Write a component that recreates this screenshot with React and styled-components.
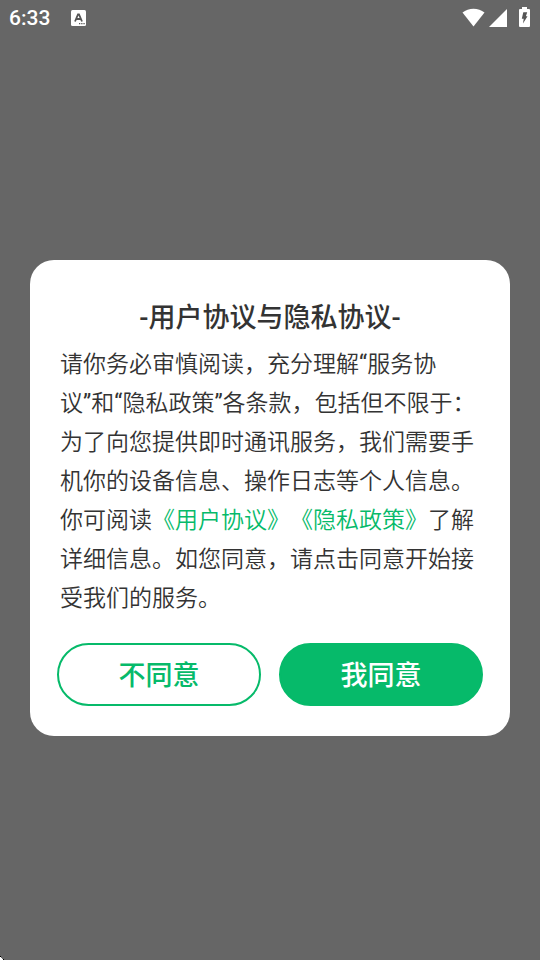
import React from "react";
import styled, { createGlobalStyle } from "styled-components";

const GREEN = "#06ba6a";

const GlobalStyle = createGlobalStyle`
  * { box-sizing: border-box; }
  body {
    margin: 0;
    background: #666666;
    font-family: Roboto, "Noto Sans CJK SC", sans-serif;
    color: #333333;
  }
`;

const Screen = styled.div`
  position: relative;
  display: flex;
  flex-direction: column;
  min-height: 100vh;
  background: #666666;
`;

const StatusBar = styled.header`
  display: flex;
  align-items: center;
  justify-content: space-between;
  height: 36px;
  padding: 0 9px;
  color: #ffffff;
`;

const StatusGroup = styled.div`
  display: flex;
  align-items: center;
  gap: ${(p) => p.$gap}px;
`;

const Clock = styled.time`
  font-size: 21px;
  font-weight: 500;
  line-height: 36px;
`;

const Icon = styled.svg`
  display: block;
  flex: none;
`;

const Stage = styled.main`
  flex: 1;
  display: flex;
  align-items: center;
  justify-content: center;
  padding: 0 30px;
`;

const Dialog = styled.section`
  width: 100%;
  padding: 32px 27px 30px;
  border-radius: 24px;
  background: #ffffff;
`;

const Title = styled.h1`
  margin: 0;
  font-size: 27px;
  font-weight: 500;
  line-height: 53px;
  text-align: center;
`;

const Message = styled.p`
  margin: 0 3px 25px;
  font-size: 23px;
  font-weight: 350;
  line-height: 39px;
  text-spacing-trim: space-all;
`;

const Quote = styled.span`
  font-weight: 400;
`;

const PolicyLink = styled.a`
  color: ${GREEN};
  text-decoration: none;
`;

const Actions = styled.div`
  display: grid;
  grid-template-columns: 1fr 1fr;
  gap: 18px;
`;

const ActionButton = styled.button`
  height: 63px;
  padding: 0 0 2px;
  border: 2px solid ${GREEN};
  border-radius: 32px;
  background: ${(p) => (p.$primary ? GREEN : "#ffffff")};
  color: ${(p) => (p.$primary ? "#ffffff" : GREEN)};
  font-family: inherit;
  font-size: 27px;
  font-weight: 500;
  cursor: pointer;
`;

const Corner = styled.svg`
  position: absolute;
  left: 0;
  bottom: 0;
`;

export default function App() {
  return (
    <Screen>
      <GlobalStyle />
      <StatusBar>
        <StatusGroup $gap={21}>
          <Clock>6:33</Clock>
          <Icon width="15" height="16" viewBox="0 0 15 16" aria-hidden="true">
            <rect width="15" height="16" rx="1.5" fill="#fff" />
            <path d="M4 11.5 7 4.5h1l3 7M5.2 9h4.6" fill="none" stroke="#555" strokeWidth="1.8" />
            <path d="M8 13h1.3v1.3H8zM10.2 13h1.3v1.3h-1.3zM12.4 13h1.3v1.3h-1.3z" fill="#555" />
          </Icon>
        </StatusGroup>
        <StatusGroup $gap={4}>
          <Icon width="23" height="20" viewBox="0 0 23 20" aria-label="Wi-Fi">
            <path d="M0.5 4.5C6.5 -0.6 16.5 -0.6 22.5 4.5L11.5 18.5Z" fill="#fff" />
          </Icon>
          <Icon width="18" height="20" viewBox="0 0 18 20" aria-label="信号">
            <path d="M18 1V19H0Z" fill="#fff" />
          </Icon>
          <Icon width="20" height="22" viewBox="0 0 20 22" aria-label="电池">
            <path
              d="M8.500 2H11V0H16V2H18Q19 2 19 3V19Q19 20 18 20H9Q8 20 8 19V3Q8 2 9 2Z"
              fill="#fff"
            />
            <path d="M12.300 5.200H16.200L14.900 9.200H16.500L12 16.500L12.700 11.800H10.800Z" fill="#555" />
          </Icon>
        </StatusGroup>
      </StatusBar>
      <Stage>
        <Dialog role="dialog" aria-modal="true" aria-labelledby="consent-title">
          <Title id="consent-title">-用户协议与隐私协议-</Title>
          <Message>
            请你务必审慎阅读，充分理解<Quote>“</Quote>服务协议<Quote>”</Quote>和<Quote>“</Quote>隐私政策<Quote>”</Quote>各条款，包括但不限于：为了向您提供即时通讯服务，我们需要手机你的设备信息、操作日志等个人信息。你可阅读
            <PolicyLink href="#terms">《用户协议》</PolicyLink>
            <PolicyLink href="#privacy">《隐私政策》</PolicyLink>
            了解详细信息。如您同意，请点击同意开始接受我们的服务。
          </Message>
          <Actions>
            <ActionButton type="button">不同意</ActionButton>
            <ActionButton type="button" $primary>我同意</ActionButton>
          </Actions>
        </Dialog>
      </Stage>
      <Corner width="4" height="4" viewBox="0 0 4 4" aria-hidden="true">
        <path d="M0 1h1v1h1v1h1v1H0Z" fill="#fff" />
        <path d="M0 0h1v1H0ZM3 3h1v1H3Z" fill="#000" />
      </Corner>
    </Screen>
  );
}
